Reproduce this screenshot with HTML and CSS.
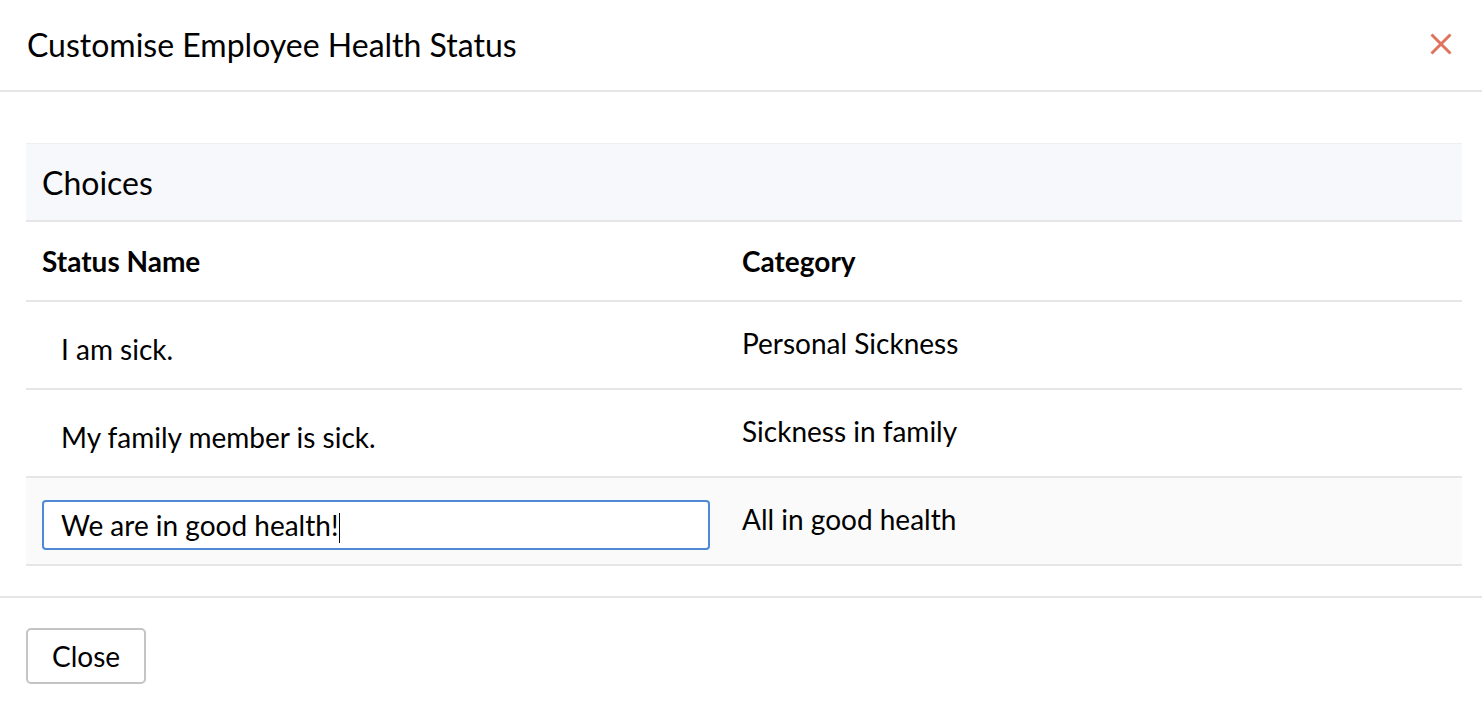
FILE: index.html
```html
<!DOCTYPE html>
<html>
<head>
<meta charset="utf-8">
<link rel="stylesheet" href="styles.css">
</head>
<body>
<div class="dialog">
  <header class="dlg-header">
    <h1 class="dlg-title">Customise Employee Health Status</h1>
    <button class="dlg-x" aria-label="Close">
      <svg width="22" height="22" viewBox="0 0 22 22"><path d="M1.5 1.5 L20.5 20.5 M20.5 1.5 L1.5 20.5" stroke="#e0735f" stroke-width="3" fill="none"/></svg>
    </button>
  </header>
  <main class="dlg-body">
    <section class="choices">
      <div class="choices-head">Choices</div>
      <div class="row row-head">
        <div class="cell">Status Name</div>
        <div class="cell">Category</div>
      </div>
      <div class="row">
        <div class="cell cell-name"><input class="name-input" type="text" value="I am sick."></div>
        <div class="cell cell-cat">Personal Sickness</div>
      </div>
      <div class="row">
        <div class="cell cell-name"><input class="name-input" type="text" value="My family member is sick."></div>
        <div class="cell cell-cat">Sickness in family</div>
      </div>
      <div class="row row-active">
        <div class="cell cell-name"><div class="name-input focused">We are in good health!<span class="caret"></span></div></div>
        <div class="cell cell-cat">All in good health</div>
      </div>
    </section>
  </main>
  <footer class="dlg-footer">
    <button class="btn">Close</button>
  </footer>
</div>
</body>
</html>
```
FILE: styles.css
```css
* { box-sizing: border-box; }
html, body { margin: 0; padding: 0; background: #fff; }
body { font-family: Lato, "Open Sans", sans-serif; color: #000; }

.dialog { width: 1482px; }

.dlg-header {
  height: 92px;
  display: flex;
  align-items: center;
  justify-content: space-between;
  padding: 0 30px 2px 27px;
  border-bottom: 2px solid #e6e6e6;
}
.dlg-title {
  margin: 0;
  font-size: 32px;
  font-weight: 400;
  letter-spacing: 0;
}
.dlg-x {
  background: none;
  border: 0;
  padding: 0;
  width: 22px;
  height: 22px;
  display: flex;
}

.dlg-body { padding: 51px 20px 30px 26px; }

.choices { width: 1436px; }
.choices-head {
  height: 79px;
  background: #f7f8fb;
  border-top: 1px solid #eceef2;
  border-bottom: 2px solid #e6e6e6;
  display: flex;
  align-items: center;
  padding-left: 16px;
  font-size: 32px;
}

.row {
  display: grid;
  grid-template-columns: 700px 1fr;
  height: 88px;
  border-bottom: 2px solid #e6e6e6;
  align-items: center;
}
.row-head { height: 80px; font-weight: 700; font-size: 28px; }
.row-active { background: #fafafa; }
.cell { padding-left: 16px; }
.cell-cat { font-size: 28px; padding-bottom: 4px; }
.cell-name { padding-right: 16px; padding-top: 8px; }

.name-input {
  display: block;
  width: 668px;
  height: 50px;
  border: 2px solid transparent;
  border-radius: 4px;
  background: transparent;
  font-family: Lato, "Open Sans", sans-serif;
  font-size: 28px;
  color: #000;
  padding: 0 17px;
  outline: none;
  line-height: 46px;
}
.name-input.focused {
  border-color: #4f88d3;
  background: #fff;
}
.caret {
  display: inline-block;
  width: 1px;
  height: 30px;
  background: #000;
  vertical-align: -7px;
  margin-left: 1px;
}

.dlg-footer {
  border-top: 2px solid #e6e6e6;
  padding: 30px 26px;
}
.btn {
  width: 120px;
  height: 56px;
  border: 2px solid #c4c4c4;
  border-radius: 5px;
  background: #fff;
  font-family: Lato, "Open Sans", sans-serif;
  font-size: 28px;
  color: #000;
  padding: 0;
}
```
